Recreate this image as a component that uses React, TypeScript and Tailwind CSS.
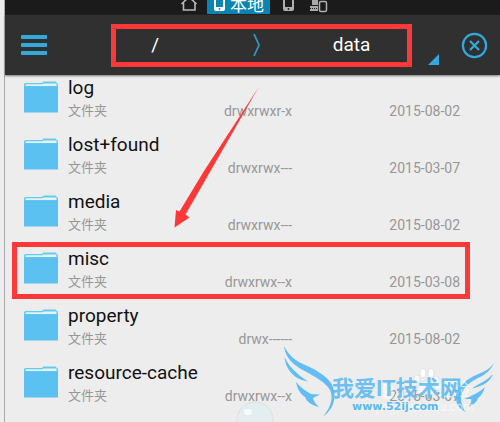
import React from "react";

type Entry = { name: string; perms: string; date: string; marked?: boolean };

const entries: Entry[] = [
  { name: "log", perms: "drwxrwxr-x", date: "2015-08-02" },
  { name: "lost+found", perms: "drwxrwx---", date: "2015-03-07" },
  { name: "media", perms: "drwxrwx---", date: "2015-08-02" },
  { name: "misc", perms: "drwxrwx--x", date: "2015-03-08", marked: true },
  { name: "property", perms: "drwx------", date: "2015-08-02" },
  { name: "resource-cache", perms: "drwxrwx--x", date: "2015-03-07" },
  { name: "ssh", perms: "drwxrwx--x", date: "2015-03-07" },
];

function FolderIcon() {
  return (
    <svg width="34" height="32" viewBox="0 0 34 32" className="shrink-0" aria-hidden="true">
      <path d="M0 7V3.500Q0 2 1.500 2H18L19.500 0.500H31.500L33 2Q34 2 34 3.500V7Z" fill="#62cbee" />
      <path d="M1.500 5V4.200Q1.500 3.200 2.500 3.200H18.500L19.500 2.600H32.500V5Z" fill="#e6f2f6" />
      <rect y="5.500" width="34" height="26" rx="0.600" fill="#5ac1f0" />
    </svg>
  );
}

function StatusTabs() {
  return (
    <nav className="flex h-[15px] shrink-0 items-start overflow-hidden bg-[#1b1b1b] pl-[174px]">
      <button aria-label="首页" className="flex w-7 justify-start">
        <svg width="20" height="11" viewBox="0 0 20 11" fill="none" stroke="#b9b9b9" strokeWidth="1.600">
          <path d="M2.500 4L10 -3L17.500 4M4.500 3V10H16V3" />
        </svg>
      </button>
      <button className="flex h-[14px] w-[63px] items-end justify-center gap-1 bg-[#0a85b1] pb-[3px] text-[17px] leading-3 text-white">
        <svg width="13" height="11" viewBox="0 0 13 11" className="shrink-0" aria-hidden="true">
          <path d="M1 0H12V9Q12 11 10 11H3Q1 11 1 9Z" fill="#fff" />
          <path d="M3 0H10V7H3Z" fill="#0a85b1" />
          <circle cx="6.500" cy="9" r="0.900" fill="#0a85b1" />
        </svg>
        <span>本地</span>
      </button>
      <button aria-label="手机" className="ml-3 flex w-7">
        <svg width="13" height="12" viewBox="0 0 13 12">
          <path d="M1 0H12V9Q12 11 10 11H3Q1 11 1 9Z" fill="#b0b0b0" />
          <path d="M3 0H10V7H3Z" fill="#1b1b1b" />
          <circle cx="6.500" cy="9" r="0.900" fill="#1b1b1b" />
        </svg>
      </button>
      <button aria-label="设备" className="flex w-6">
        <svg width="18" height="13" viewBox="0 0 18 13">
          <path d="M2 0H8V5H2ZM0 6H8V11H0Z" fill="#a8a8a8" />
          <path d="M0 8.500H8" stroke="#1b1b1b" strokeDasharray="1 1" />
          <rect x="9.500" y="1.500" width="7" height="10" rx="1.500" fill="none" stroke="#b0b0b0" strokeWidth="1.500" />
        </svg>
      </button>
    </nav>
  );
}

function Header() {
  return (
    <header className="relative z-10 flex h-[60px] shrink-0 items-center bg-[#303030] shadow-[0_1px_2px_#777]">
      <button aria-label="菜单" className="ml-4 flex w-[26px] flex-col gap-1">
        <span className="h-1 rounded-[1px] bg-[#31aadb]" />
        <span className="h-1 rounded-[1px] bg-[#31aadb]" />
        <span className="h-1 rounded-[1px] bg-[#31aadb]" />
      </button>
      <div className="ml-16 mr-4 grid h-[43px] flex-1 grid-cols-[5fr_8fr_4fr] items-center justify-items-center border-5 border-[#fd3838] pr-6 text-[19px] text-white">
        <button>/</button>
        <svg width="8" height="24" viewBox="0 0 8 24" fill="none" stroke="#3296c2" strokeWidth="1.800" aria-hidden="true">
          <path d="M1 1L6 12L1 23" />
        </svg>
        <button>data</button>
      </div>
      <button aria-label="展开" className="self-end pb-[10px]">
        <svg width="11" height="11" viewBox="0 0 11 11"><path d="M11 0V11H0Z" fill="#31aadb" /></svg>
      </button>
      <button aria-label="关闭" className="ml-[22px] mr-3">
        <svg width="27" height="27" viewBox="0 0 27 27" fill="none" stroke="#31aadb" strokeWidth="2.200">
          <circle cx="13.500" cy="13.500" r="11.600" />
          <path d="M9 9L18 18M18 9L9 18" />
        </svg>
      </button>
    </header>
  );
}

function Row({ entry }: { entry: Entry }) {
  return (
    <li className="relative flex h-[57px] items-start pl-[19px] pr-10">
      <div className="pt-[6px]"><FolderIcon /></div>
      <div className="ml-[10px] min-w-0 flex-1">
        <div className="text-[19px] leading-[26px] text-[#111]">{entry.name}</div>
        <div className="grid grid-cols-[2fr_2fr_3fr] text-sm leading-5 text-[#979797]">
          <span className="text-[13px] leading-5">文件夹</span>
          <span className="whitespace-nowrap text-right">{entry.perms}</span>
          <span className="whitespace-nowrap text-right">{entry.date}</span>
        </div>
      </div>
      {entry.marked && (
        <div className="absolute -top-1 bottom-1 left-[7px] right-[30px] border-5 border-[#fd3838]" />
      )}
    </li>
  );
}

function Arrow() {
  return (
    <svg className="pointer-events-none absolute left-[170px] top-[84px] z-20" width="92" height="148" viewBox="170 84 92 148" aria-hidden="true">
      <path d="M258.500 87.500L185.500 214.500L189.500 217.500L174.500 227.500L176 210L179.500 211.500L204 171Z" fill="#fd3838" />
    </svg>
  );
}

function Watermark() {
  return (
    <div className="pointer-events-none absolute left-[234px] top-[344px] h-[78px] w-[266px] overflow-hidden">
      <svg className="absolute inset-0" width="266" height="78" viewBox="234 344 266 78" aria-hidden="true">
        <circle cx="255" cy="420" r="18" fill="#e3eef0" stroke="#d9e1e3" />
        <ellipse cx="248" cy="412" rx="4" ry="3" fill="#f6fbfb" />
        <g fill="#fff" fillOpacity="0.850" stroke="#dedede" strokeWidth="0.800">
          <ellipse cx="417" cy="379" rx="3" ry="4" />
          <ellipse cx="423" cy="373" rx="3" ry="4.500" />
          <ellipse cx="431" cy="373" rx="3" ry="4.500" />
          <ellipse cx="436" cy="380" rx="3" ry="4" />
          <path d="M426 381C431 381 435 388 435 391C435 396 429 394 426 394C423 394 417 396 417 391C417 388 421 381 426 381Z" />
        </g>
        <g fill="#62bdf4">
          <path d="M284 346C289 356 296 361 303 364C315 369 325 375 331 383C337 393 336 408 323 416.500C332 406 335 394 327 386C319 377 304 372 295 365C289 360 285 354 284 346Z" />
          <path d="M284.500 357C289 367 297 374 308 381.500C299 380 293 376 289 370C286 366 285 361 284.500 357Z" />
          <path d="M296 382C301 388 306 391 311 394L320 394.500L313 398C314 402 316 404 319 407C311 405 307 402 305 397C300 394 297 388 296 382Z" />
          <path d="M494 363C491 370 485 375 478 378C468 383 461 390 461 398C461 404 463 408 466 412C459 409 456 404 456 397C456 388 464 381 474 376C483 372 489 370 494 363Z" />
          <path d="M493 374C490 382 483 386 472 388.500C480 383 488 380 493 374Z" />
          <path d="M485 387C483 393 481 396 478 398C477 402 474 404 468 407C471 403 472 401 471 399L464 399C473 395 480 392 485 387Z" />
        </g>
      </svg>
      <span className="absolute left-[148px] top-[36px] text-xl font-bold leading-6 text-white/60">Bai</span>
      <span className="absolute left-[200px] top-[34px] whitespace-nowrap text-lg leading-6 text-white/70">经验</span>
      <span className="absolute left-[142px] top-[55px] whitespace-nowrap text-xs leading-4 text-white/60">jingyan.baidu.com</span>
      <span className="absolute left-[98px] top-[32px] whitespace-nowrap text-[22px] font-bold leading-[26px] text-[#5cbaf3]/90">我爱IT技术网</span>
      <span className="absolute left-[118px] top-[55px] whitespace-nowrap font-['DejaVu_Sans',sans-serif] text-[11px] font-bold leading-4 text-[#5cbaf3]">www.52ij.com</span>
    </div>
  );
}

export default function App() {
  return (
    <main className="relative flex h-screen flex-col overflow-hidden bg-[#ededed] pl-1 font-[Roboto,'Noto_Sans_CJK_SC',sans-serif]">
      <div className="flex min-h-0 flex-1 flex-col border-l border-[#aaa]">
        <StatusTabs />
        <Header />
        <ul className="min-h-0 flex-1 overflow-hidden">
          {entries.map((e) => <Row key={e.name} entry={e} />)}
        </ul>
      </div>
      <Watermark />
      <Arrow />
    </main>
  );
}
